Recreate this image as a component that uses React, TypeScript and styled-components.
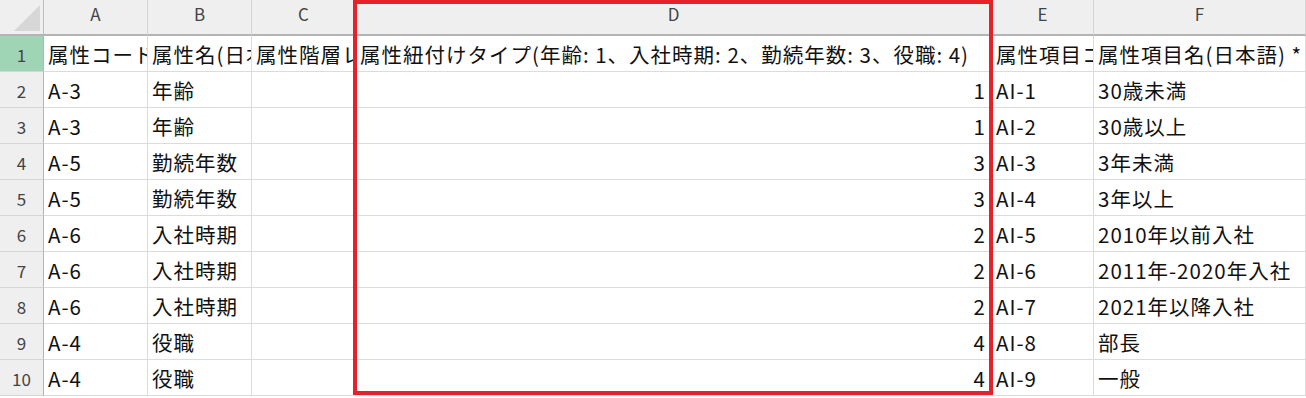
import React from "react"
import styled, { createGlobalStyle } from "styled-components"

const GlobalStyle = createGlobalStyle`
  html, body {
    margin: 0;
    padding: 0;
    background: #ffffff;
    overflow: hidden;
  }
  * {
    box-sizing: border-box;
  }
`

const Sheet = styled.div`
  display: grid;
  grid-template-columns: 44px 104px 104px 104px 636px 102px 212px;
  grid-template-rows: 36px repeat(10, 36px);
  width: 1306px;
  font-family: "Noto Sans CJK JP", "Noto Sans", sans-serif;
  overflow: hidden;
`

interface IPos {
  $row: number;
  $col: number;
}

const Corner = styled.div`
  grid-row: 1;
  grid-column: 1;
  background: #efefef;
  border-right: 1px solid #bdbdbd;
  border-bottom: 2px solid #b4b4b4;
  display: flex;
  align-items: flex-end;
  justify-content: flex-end;
  padding: 0 3px 3px 0;
`

const CornerTriangle = styled.div`
  width: 0;
  height: 0;
  border-left: 26px solid transparent;
  border-bottom: 26px solid #d7d7d7;
`

const ColHead = styled.div<{ $col: number }>`
  grid-row: 1;
  grid-column: ${({ $col }) => $col};
  background: #efefef;
  border-right: 1px solid #d5d5d5;
  border-bottom: 2px solid #b4b4b4;
  color: #444444;
  font-size: 17px;
  display: flex;
  align-items: center;
  justify-content: center;
  padding-bottom: 7px;
`

const RowHead = styled.div<{ $row: number; $active?: boolean }>`
  grid-row: ${({ $row }) => $row};
  grid-column: 1;
  background: ${({ $active }) => ($active ? "#9fd5b5" : "#efefef")};
  border-right: 1px solid #b4b4b4;
  border-bottom: 1px solid #d5d5d5;
  color: #444444;
  font-size: 17px;
  display: flex;
  align-items: center;
  justify-content: center;
  padding-top: 1px;
`

const Cell = styled.div<IPos & { $num?: boolean }>`
  grid-row: ${({ $row }) => $row};
  grid-column: ${({ $col }) => $col};
  border-right: 1px solid #dcdcdc;
  border-bottom: 1px solid #dcdcdc;
  color: #111111;
  font-size: 20.5px;
  letter-spacing: 1px;
  white-space: nowrap;
  overflow: hidden;
  display: flex;
  align-items: center;
  justify-content: ${({ $num }) => ($num ? "flex-end" : "flex-start")};
  padding: 2px ${({ $num }) => ($num ? "5px" : "0")} 0 ${({ $num }) => ($num ? "0" : "4px")};
  line-height: 1;
`

const Highlight = styled.div`
  grid-column: 5 / 6;
  grid-row: 1 / 12;
  margin: 0 -1px 1px -3px;
  border: 4px solid #e8202a;
  pointer-events: none;
  z-index: 2;
`

const columns = ["A", "B", "C", "D", "E", "F"]

const header = [
  "属性コード",
  "属性名(日本語)",
  "属性階層レベル",
  "属性紐付けタイプ(年齢: 1、入社時期: 2、勤続年数: 3、役職: 4)",
  "属性項目コード",
  "属性項目名(日本語) *",
]

const rows = [
  ["A-3", "年齢", "", "1", "AI-1", "30歳未満"],
  ["A-3", "年齢", "", "1", "AI-2", "30歳以上"],
  ["A-5", "勤続年数", "", "3", "AI-3", "3年未満"],
  ["A-5", "勤続年数", "", "3", "AI-4", "3年以上"],
  ["A-6", "入社時期", "", "2", "AI-5", "2010年以前入社"],
  ["A-6", "入社時期", "", "2", "AI-6", "2011年-2020年入社"],
  ["A-6", "入社時期", "", "2", "AI-7", "2021年以降入社"],
  ["A-4", "役職", "", "4", "AI-8", "部長"],
  ["A-4", "役職", "", "4", "AI-9", "一般"],
]

const App = () => (
  <>
    <GlobalStyle />
    <Sheet>
      <Corner>
        <CornerTriangle />
      </Corner>
      {columns.map((c, i) => (
        <ColHead key={c} $col={i + 2}>{c}</ColHead>
      ))}

      <RowHead $row={2} $active>1</RowHead>
      {header.map((h, i) => (
        <Cell key={i} $row={2} $col={i + 2}>{h}</Cell>
      ))}

      {rows.map((r, ri) => (
        <React.Fragment key={ri}>
          <RowHead $row={ri + 3}>{ri + 2}</RowHead>
          {r.map((v, ci) => (
            <Cell key={ci} $row={ri + 3} $col={ci + 2} $num={ci === 3}>{v}</Cell>
          ))}
        </React.Fragment>
      ))}

      <Highlight />
    </Sheet>
  </>
)

export default App
